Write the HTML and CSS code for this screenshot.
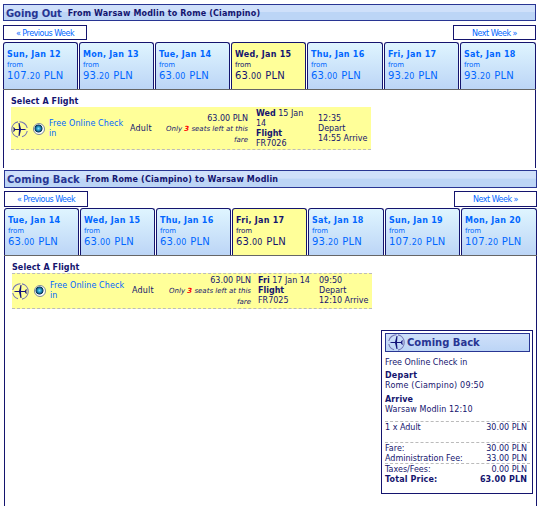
FILE: index.html
```html
<!DOCTYPE html>
<html lang="en">
<head>
    <meta charset="UTF-8">
    <title>Select Flights</title>
    <link rel="stylesheet" href="styles.css">
</head>
<body>
    <svg width="0" height="0" class="defs">
        <symbol id="plane" viewBox="0 0 17 17">
            <path d="M8.5 0.8 A7.7 7.7 0 0 0 0.8 7 M0.8 10 A7.7 7.7 0 0 0 6 15.8 M10 0.9 A7.7 7.7 0 0 1 16.2 8.5 A7.7 7.7 0 0 1 10 16.1" fill="none" stroke="#7474b4" stroke-width="1.1"/>
            <path d="M1.5 8.5 L3.5 7.9 H7 L8.5 2 H9.5 L9 7.9 H12.8 L14 6.3 H14.8 L14.3 8.5 L14.8 10.7 H14 L12.8 9.1 H9 L9.5 15 H8.5 L7 9.1 H3.5 Z" fill="#14147a"/>
        </symbol>
    </svg>

    <div class="journey out">
        <div class="journey-header"><h2>Going Out</h2><span class="route">From Warsaw Modlin to Rome (Ciampino)</span></div>
        <div class="week-nav">
            <a class="week-button">« Previous Week</a>
            <a class="week-button next">Next Week »</a>
        </div>
        <div class="days">
            <div class="day"><b>Sun, Jan 12</b><i>from</i><span>107<small>.20</small> PLN</span></div>
            <div class="day"><b>Mon, Jan 13</b><i>from</i><span>93<small>.20</small> PLN</span></div>
            <div class="day"><b>Tue, Jan 14</b><i>from</i><span>63<small>.00</small> PLN</span></div>
            <div class="day selected"><b>Wed, Jan 15</b><i>from</i><span>63<small>.00</small> PLN</span></div>
            <div class="day"><b>Thu, Jan 16</b><i>from</i><span>63<small>.00</small> PLN</span></div>
            <div class="day"><b>Fri, Jan 17</b><i>from</i><span>93<small>.20</small> PLN</span></div>
            <div class="day"><b>Sat, Jan 18</b><i>from</i><span>93<small>.20</small> PLN</span></div>
        </div>
        <div class="panel">
            <h3>Select A Flight</h3>
            <div class="flight">
                <svg class="plane outbound"><use href="#plane"/></svg>
                <span class="radio"></span>
                <a class="fare-link">Free Online Check<br>in</a>
                <span class="adult">Adult</span>
                <div class="price">63.00 PLN<em>Only <strong>3</strong> seats left at this<br>fare</em></div>
                <div class="date"><b>Wed</b> 15 Jan<br>14<br><b>Flight</b><br>FR7026</div>
                <div class="times">12:35<br>Depart<br>14:55 Arrive</div>
            </div>
        </div>
    </div>

    <div class="journey back">
        <div class="journey-header"><h2>Coming Back</h2><span class="route">From Rome (Ciampino) to Warsaw Modlin</span></div>
        <div class="week-nav">
            <a class="week-button">« Previous Week</a>
            <a class="week-button next">Next Week »</a>
        </div>
        <div class="days">
            <div class="day"><b>Tue, Jan 14</b><i>from</i><span>63<small>.00</small> PLN</span></div>
            <div class="day"><b>Wed, Jan 15</b><i>from</i><span>63<small>.00</small> PLN</span></div>
            <div class="day"><b>Thu, Jan 16</b><i>from</i><span>63<small>.00</small> PLN</span></div>
            <div class="day selected"><b>Fri, Jan 17</b><i>from</i><span>63<small>.00</small> PLN</span></div>
            <div class="day"><b>Sat, Jan 18</b><i>from</i><span>93<small>.20</small> PLN</span></div>
            <div class="day"><b>Sun, Jan 19</b><i>from</i><span>107<small>.20</small> PLN</span></div>
            <div class="day"><b>Mon, Jan 20</b><i>from</i><span>107<small>.20</small> PLN</span></div>
        </div>
        <div class="panel">
            <h3>Select A Flight</h3>
            <div class="flight">
                <svg class="plane"><use href="#plane"/></svg>
                <span class="radio"></span>
                <a class="fare-link">Free Online Check<br>in</a>
                <span class="adult">Adult</span>
                <div class="price">63.00 PLN<em>Only <strong>3</strong> seats left at this<br>fare</em></div>
                <div class="date"><b>Fri</b> 17 Jan 14<br><b>Flight</b><br>FR7025</div>
                <div class="times">09:50<br>Depart<br>12:10 Arrive</div>
            </div>

            <div class="summary">
                <div class="summary-header"><svg class="plane"><use href="#plane"/></svg>Coming Back</div>
                <p>Free Online Check in</p>
                <p class="depart"><b>Depart</b><br>Rome (Ciampino) 09:50</p>
                <p class="arrive"><b>Arrive</b><br>Warsaw Modlin 12:10</p>
                <div class="passengers"><div class="line"><span>1 x Adult</span><span>30.00 PLN</span></div></div>
                <div class="fees">
                    <div class="line"><span>Fare:</span><span>30.00 PLN</span></div>
                    <div class="line"><span>Administration Fee:</span><span>33.00 PLN</span></div>
                </div>
                <div class="fees">
                    <div class="line"><span>Taxes/Fees:</span><span>0.00 PLN</span></div>
                    <div class="line total"><span>Total Price:</span><span>63.00 PLN</span></div>
                </div>
            </div>
        </div>
    </div>
</body>
</html>
```
FILE: styles.css
```css
* {
    box-sizing: border-box;
}

body {
    margin: 0;
    height: 506px;
    overflow: hidden;
    background: #fff;
    color: #14146e;
    font: 8px/10px "DejaVu Sans", Verdana, sans-serif;
    white-space: nowrap;
}

h2, h3, p {
    margin: 0;
}

.defs {
    display: block;
}

.journey {
    width: 533px;
    margin: 4px 0 0 3px;
}

.journey.back {
    margin: 2px 0 0 4px;
}

.journey-header {
    display: flex;
    align-items: center;
    height: 17px;
    padding: 2px 0 0 2px;
    border: 1px solid #283593;
    background: linear-gradient(#cfe0fa 0, #cfe0fa 45%, #bcd5f6 50%, #bcd5f6 100%);
}

.back .journey-header {
    height: 18px;
}

.journey-header h2 {
    color: #283593;
    font-size: 10px;
    line-height: 12px;
}

.out h2 {
    letter-spacing: -0.1px;
}

.route {
    margin-left: 6px;
    font-weight: bold;
    letter-spacing: 0.16px;
}

.week-nav {
    display: flex;
    justify-content: space-between;
    padding: 4px 0 2px;
}

.back .week-nav {
    padding: 3px 0 1px;
}

.week-button {
    width: 84px;
    height: 15px;
    border: 1px solid #14146e;
    color: #0066ff;
    font: 8px/15px "DejaVu Sans", Verdana, sans-serif;
    letter-spacing: -0.5px;
    text-align: center;
}

.back .week-button {
    height: 16px;
}

.week-button.next {
    width: 83px;
}

.days {
    display: grid;
    grid-template-columns: repeat(4, 75px) 76px 75px 76px;
    column-gap: 1px;
    height: 48px;
    border-bottom: 1px solid #666;
}

.day {
    display: flex;
    flex-direction: column;
    padding: 6px 0 0 3px;
    border: 1px solid #14146e;
    border-bottom: 0;
    border-radius: 3px 3px 0 0;
    background: linear-gradient(#dff5ff, #bcd5f6);
    color: #0066ff;
}

.day.selected {
    background: #ffff99;
    color: #14146e;
}

.day b {
    line-height: 11px;
    letter-spacing: 0.26px;
}

.day i {
    font-size: 7px;
    font-style: normal;
    line-height: 10px;
    letter-spacing: -0.1px;
}

.day span {
    font-size: 10px;
    line-height: 12px;
    letter-spacing: 0.25px;
}

.day small {
    font-size: 8px;
}

.panel {
    height: 78px;
    padding: 7px;
    border: solid #14146e;
    border-width: 0 1px;
}

.back .panel {
    height: 260px;
}

h3 {
    font-size: 8px;
    line-height: 10px;
    letter-spacing: 0.1px;
}

.flight {
    display: grid;
    grid-template-columns: 22px 16px 81px 30px 88px 8px 62px 53px;
    align-items: center;
    width: 360px;
    height: 43px;
    padding-top: 2px;
    border-bottom: 1px dashed #bbb;
    background: #ffff99;
}

.back .flight {
    grid-template-columns: 22px 16px 82px 30px 89px 7px 61px 53px;
    height: 36px;
    padding-top: 0;
    border-top: 1px dashed #bbb;
}

.plane {
    width: 17px;
    height: 17px;
}

.plane.outbound {
    transform: scaleX(-1);
}

.radio {
    width: 12px;
    height: 12px;
    border: 1px solid #7d8a99;
    border-radius: 50%;
    background: radial-gradient(circle at 4.5px 4.5px, #7fe0ff 0, #2090c0 2px, #0a3350 3.6px, #fff 4.4px);
}

.fare-link {
    color: #0066ff;
    letter-spacing: 0.1px;
}

.adult {
    letter-spacing: 0.2px;
}

.price {
    line-height: 11px;
    text-align: right;
}

.price em {
    display: block;
    font-size: 7px;
}

.price strong {
    color: #f00;
}

.date {
    grid-column: 7;
}

.summary {
    width: 152px;
    height: 164px;
    margin: 21px 0 0 369px;
    padding: 2px 2px 0 3px;
    border: 1px solid #14146e;
}

.summary p {
    margin-bottom: 3px;
}

.summary .depart {
    margin-bottom: 4px;
    letter-spacing: 0.2px;
}

.summary .arrive {
    margin-bottom: 6px;
    letter-spacing: 0.1px;
}

.summary-header {
    display: flex;
    align-items: center;
    width: 145px;
    height: 19px;
    margin-bottom: 6px;
    padding-left: 2px;
    border: 1px solid #283593;
    background: linear-gradient(#cfe0fa, #bcd5f6);
    color: #283593;
    font-size: 10px;
    font-weight: bold;
}

.summary-header .plane {
    margin-right: 2px;
}

.line {
    display: flex;
    justify-content: space-between;
}

.passengers, .fees {
    padding: 1px 3px 0 0;
    border-top: 1px dashed #bbb;
}

.passengers {
    height: 21px;
}

.fees + .fees {
    margin-top: -1px;
}

.total {
    font-weight: bold;
    letter-spacing: 0.15px;
}
```
